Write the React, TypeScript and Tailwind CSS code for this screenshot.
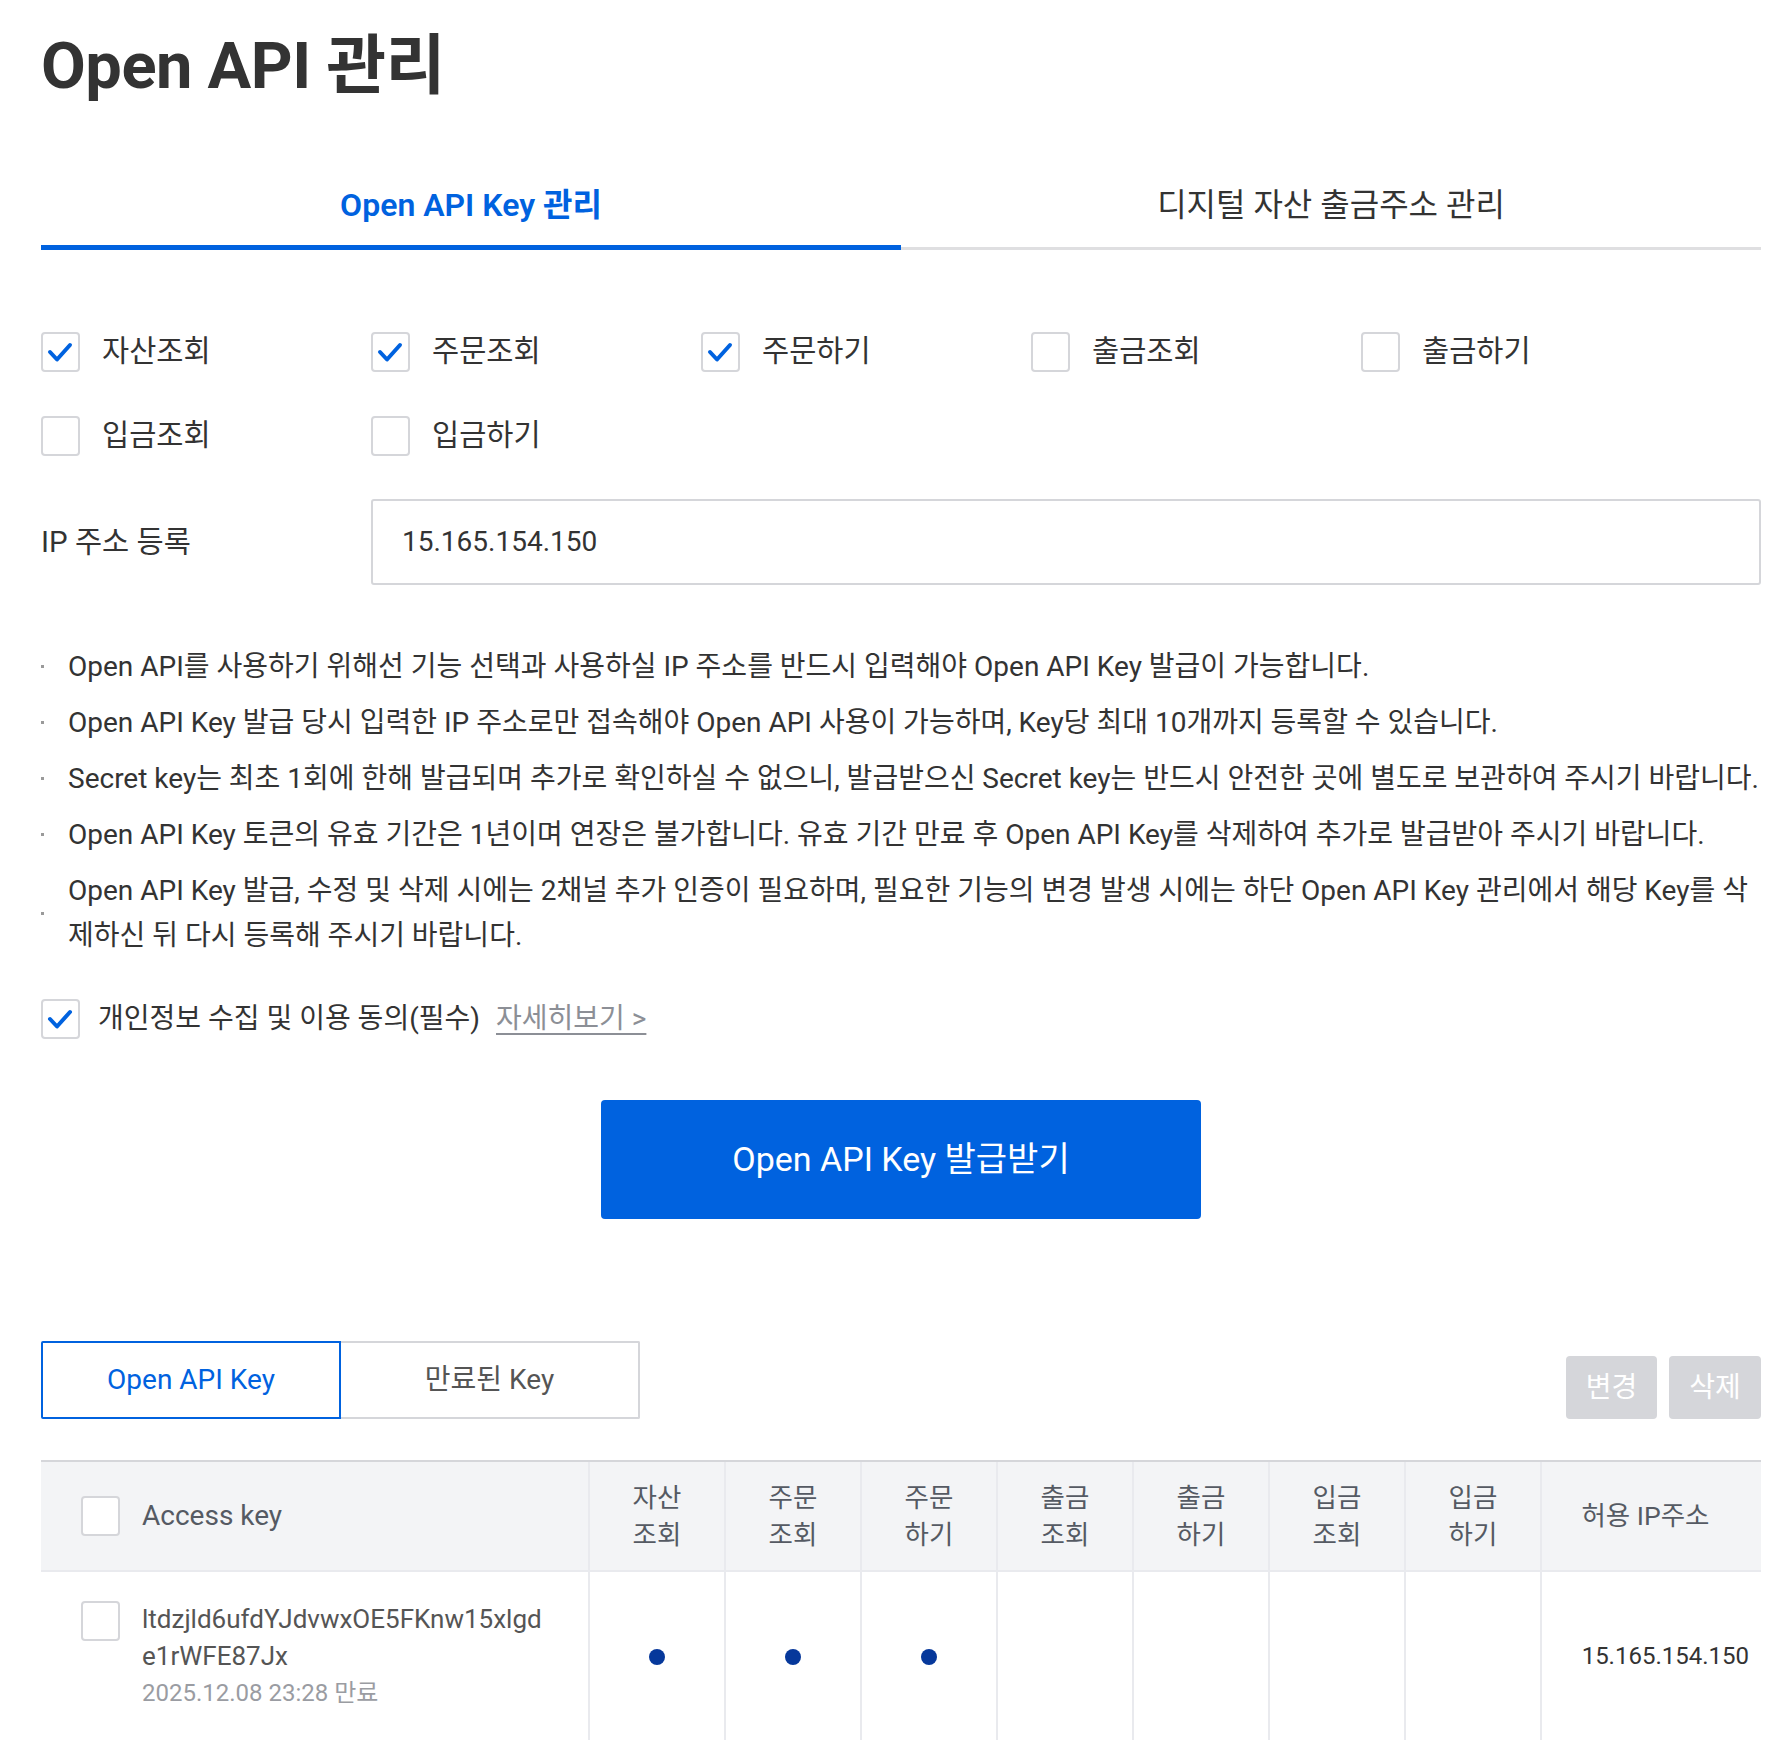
import React from "react";

function CheckBox({ checked = false }: { checked?: boolean }) {
  return (
    <span className="flex h-[40px] w-[39px] shrink-0 items-center justify-center rounded-[4px] border-2 border-[#d5d6da] bg-white">
      {checked && (
        <svg width="35" height="36" viewBox="0 0 35 36" fill="none">
          <polyline
            points="7,18 14,25.5 27,11"
            stroke="#0062df"
            strokeWidth="4"
            strokeLinecap="round"
            strokeLinejoin="round"
          />
        </svg>
      )}
    </span>
  );
}

const perms: { label: string; checked: boolean }[] = [
  { label: "자산조회", checked: true },
  { label: "주문조회", checked: true },
  { label: "주문하기", checked: true },
  { label: "출금조회", checked: false },
  { label: "출금하기", checked: false },
  { label: "입금조회", checked: false },
  { label: "입금하기", checked: false },
];

const notes: string[][] = [
  ["Open API를 사용하기 위해선 기능 선택과 사용하실 IP 주소를 반드시 입력해야 Open API Key 발급이 가능합니다."],
  ["Open API Key 발급 당시 입력한 IP 주소로만 접속해야 Open API 사용이 가능하며, Key당 최대 10개까지 등록할 수 있습니다."],
  ["Secret key는 최초 1회에 한해 발급되며 추가로 확인하실 수 없으니, 발급받으신 Secret key는 반드시 안전한 곳에 별도로 보관하여 주시기 바랍니다."],
  ["Open API Key 토큰의 유효 기간은 1년이며 연장은 불가합니다. 유효 기간 만료 후 Open API Key를 삭제하여 추가로 발급받아 주시기 바랍니다."],
  [
    "Open API Key 발급, 수정 및 삭제 시에는 2채널 추가 인증이 필요하며, 필요한 기능의 변경 발생 시에는 하단 Open API Key 관리에서 해당 Key를 삭",
    "제하신 뒤 다시 등록해 주시기 바랍니다.",
  ],
];

const cols: [string, string, boolean][] = [
  ["자산", "조회", true],
  ["주문", "조회", true],
  ["주문", "하기", true],
  ["출금", "조회", false],
  ["출금", "하기", false],
  ["입금", "조회", false],
  ["입금", "하기", false],
];

export default function App() {
  return (
    <div className="min-h-[1740px] w-full bg-white font-['Roboto','Noto_Sans_CJK_KR',sans-serif] text-[#333]">
      <div className="ml-[41px] w-[1720px]">
        {/* Title */}
        <h1 className="mt-[30px] h-[72px] text-[65px] font-bold leading-[72px] tracking-[-0.5px] text-[#333]">
          Open API 관리
        </h1>

        {/* Tabs */}
        <div className="mt-[63px] flex border-b-[3px] border-[#dfdfe1]">
          <div className="-mb-[3px] flex h-[85px] flex-1 items-center justify-center border-b-[5px] border-[#0062df] text-[32px] font-semibold text-[#0062df]">
            Open API Key 관리
          </div>
          <div className="-mb-[3px] flex h-[85px] flex-1 items-center justify-center pb-[5px] text-[32px] text-[#333]">
            디지털 자산 출금주소 관리
          </div>
        </div>

        {/* Permission checkboxes */}
        <div className="mt-[82px] grid grid-cols-[repeat(5,330px)] gap-y-[44px]">
          {perms.map((p) => (
            <label key={p.label} className="flex h-[40px] items-center gap-[22px]">
              <CheckBox checked={p.checked} />
              <span className="text-[29.5px] leading-none text-[#333]">{p.label}</span>
            </label>
          ))}
        </div>

        {/* IP row */}
        <div className="mt-[43px] flex h-[86px] items-center">
          <div className="w-[330px] text-[29.5px] text-[#333]">IP 주소 등록</div>
          <div className="flex h-[86px] flex-1 items-center rounded-[3px] border-2 border-[#d5d6da] pl-[29px] text-[28px] text-[#333]">
            15.165.154.150
          </div>
        </div>

        {/* Notes */}
        <ul className="mt-[59px] flex flex-col gap-[11px]">
          {notes.map((lines, i) => (
            <li key={i} className="flex items-center">
              <span className="mr-[24px] h-[3px] w-[3px] shrink-0 bg-[#9a9a9a]" />
              <div className="flex flex-col">
                {lines.map((l, j) => (
                  <span key={j} className="whitespace-nowrap text-[28px] leading-[45px] text-[#333]">
                    {l}
                  </span>
                ))}
              </div>
            </li>
          ))}
        </ul>

        {/* Consent */}
        <div className="mt-[41px] flex h-[40px] items-center">
          <CheckBox checked />
          <span className="ml-[18px] text-[28px] text-[#333]">개인정보 수집 및 이용 동의(필수)</span>
          <a className="ml-[16px] text-[28px] text-[#8c8f96] underline underline-offset-[5px]">자세히보기 &gt;</a>
        </div>

        {/* Issue button */}
        <button className="mx-auto mt-[61px] flex h-[119px] w-[600px] items-center justify-center rounded-[4px] bg-[#0062df] text-[34px] text-white">
          Open API Key 발급받기
        </button>

        {/* Key tabs + actions */}
        <div className="mt-[122px] flex items-end justify-between">
          <div className="flex">
            <div className="flex h-[78px] w-[300px] items-center justify-center rounded-l-[2px] border-2 border-[#0062df] text-[28px] text-[#0062df]">
              Open API Key
            </div>
            <div className="flex h-[78px] w-[299px] items-center justify-center rounded-r-[2px] border-2 border-l-0 border-[#d5d6da] text-[28px] text-[#555]">
              만료된 Key
            </div>
          </div>
          <div className="flex gap-[12px]">
            <button className="flex h-[63px] w-[91px] items-center justify-center rounded-[4px] bg-[#d5d6da] text-[28px] text-white">
              변경
            </button>
            <button className="flex h-[63px] w-[92px] items-center justify-center rounded-[4px] bg-[#d5d6da] text-[28px] text-white">
              삭제
            </button>
          </div>
        </div>

        {/* Table */}
        <div className="mt-[41px] border-t-2 border-[#d5d6da]">
          <div className="grid h-[110px] grid-cols-[547px_repeat(7,136px)_1fr] border-b-2 border-[#e9eaee] bg-[#f3f4f6]">
            <div className="flex items-center gap-[22px] pl-[40px]">
              <CheckBox />
              <span className="text-[28px] text-[#555a63]">Access key</span>
            </div>
            {cols.map(([a, b], i) => (
              <div
                key={i}
                className="flex flex-col items-center justify-center border-l-2 border-[#e9eaee] text-[26.5px] leading-[37px] text-[#555a63]"
              >
                <span>{a}</span>
                <span>{b}</span>
              </div>
            ))}
            <div className="flex items-center justify-center border-l-2 border-[#e9eaee] pr-[12px] text-[26.5px] text-[#555a63]">
              허용 IP주소
            </div>
          </div>
          <div className="grid h-[168px] grid-cols-[547px_repeat(7,136px)_1fr]">
            <div className="flex items-start gap-[22px] pl-[40px] pt-[29px]">
              <CheckBox />
              <div className="flex flex-col">
                <span className="text-[26px] leading-[37px] text-[#555]">ltdzjld6ufdYJdvwxOE5FKnw15xlgd</span>
                <span className="text-[26px] leading-[37px] text-[#555]">e1rWFE87Jx</span>
                <span className="text-[24px] leading-[36px] text-[#9a9ca2]">2025.12.08 23:28 만료</span>
              </div>
            </div>
            {cols.map(([, , on], i) => (
              <div key={i} className="flex items-center justify-center border-l-2 border-[#e9eaee]">
                {on && <span className="mt-[2px] h-[16px] w-[16px] rounded-full bg-[#06389b]" />}
              </div>
            ))}
            <div className="flex items-center justify-end border-l-2 border-[#e9eaee] pr-[12px] text-[24px] text-[#333]">
              15.165.154.150
            </div>
          </div>
        </div>
      </div>
    </div>
  );
}
